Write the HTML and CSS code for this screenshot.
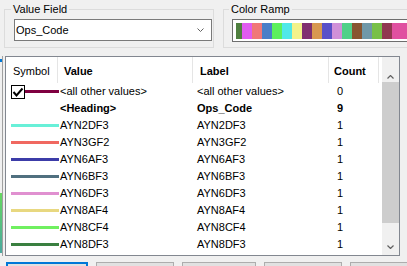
FILE: index.html
```html
<!DOCTYPE html>
<html lang="en">
<head>
    <meta charset="UTF-8">
    <meta name="viewport" content="width=device-width, initial-scale=1.0">
    <title>Unique Values</title>
    <link rel="stylesheet" href="styles.css">
</head>
<body>
    <div class="page">
        <div class="top-row">
            <fieldset class="group value-group">
                <legend>Value Field</legend>
                <div class="combo">
                    <span>Ops_Code</span>
                    <svg class="chevron" width="7" height="4" viewBox="0 0 7 4"><polyline points="0.5,0.5 3.5,3.5 6.5,0.5" fill="none" stroke="#606060" stroke-width="1"/></svg>
                </div>
            </fieldset>
            <fieldset class="group ramp-group">
                <legend>Color Ramp</legend>
                <div class="ramp">
                    <span class="swatch first" style="background:#4f7f3f"></span>
                    <span class="swatch" style="background:#e05cf0"></span>
                    <span class="swatch" style="background:#f07878"></span>
                    <span class="swatch" style="background:#4a7fc8"></span>
                    <span class="swatch" style="background:#5cf05c"></span>
                    <span class="swatch" style="background:#50e8e8"></span>
                    <span class="swatch" style="background:#f2f28a"></span>
                    <span class="swatch" style="background:#803070"></span>
                    <span class="swatch" style="background:#d89850"></span>
                    <span class="swatch" style="background:#5a50c8"></span>
                    <span class="swatch" style="background:#d090d8"></span>
                    <span class="swatch" style="background:#50d088"></span>
                    <span class="swatch" style="background:#885530"></span>
                    <span class="swatch" style="background:#7098a8"></span>
                    <span class="swatch" style="background:#78c048"></span>
                    <span class="swatch" style="background:#903850"></span>
                    <span class="swatch" style="background:#e050a0"></span>
                    <span class="swatch" style="background:#e050a0"></span>
                </div>
            </fieldset>
        </div>

        <div class="middle">
            <div class="side-edge">
                <div class="edge-mark"></div>
                <div class="edge-swatch"></div>
            </div>
            <div class="list">
                <div class="list-body">
                    <div class="list-header">
                        <div class="head-cell symbol-head">Symbol</div>
                        <div class="head-cell value-head">Value</div>
                        <div class="head-cell label-head">Label</div>
                        <div class="head-cell count-head">Count</div>
                        <div class="head-cell filler"></div>
                    </div>
                    <div class="row">
                        <div class="value-cell">
                            <svg class="check" width="14" height="14" viewBox="0 0 14 14"><rect x="0.5" y="0.5" width="13" height="13" fill="#fff" stroke="#000"/><polyline points="2.5,7 5.5,10.5 11.5,3.5" fill="none" stroke="#000" stroke-width="2"/></svg>
                            <span class="line short" style="background:#7f0040"></span>
                            <span class="text">&lt;all other values&gt;</span>
                        </div>
                        <div class="label-cell">&lt;all other values&gt;</div>
                        <div class="count-cell">0</div>
                    </div>
                    <div class="row heading">
                        <div class="value-cell"><span class="line blank"></span><span class="text">&lt;Heading&gt;</span></div>
                        <div class="label-cell">Ops_Code</div>
                        <div class="count-cell">9</div>
                    </div>
                    <div class="row">
                        <div class="value-cell"><span class="line" style="background:#68f0d8"></span><span class="text">AYN2DF3</span></div>
                        <div class="label-cell">AYN2DF3</div>
                        <div class="count-cell">1</div>
                    </div>
                    <div class="row">
                        <div class="value-cell"><span class="line" style="background:#f06860"></span><span class="text">AYN3GF2</span></div>
                        <div class="label-cell">AYN3GF2</div>
                        <div class="count-cell">1</div>
                    </div>
                    <div class="row">
                        <div class="value-cell"><span class="line" style="background:#3c3ca8"></span><span class="text">AYN6AF3</span></div>
                        <div class="label-cell">AYN6AF3</div>
                        <div class="count-cell">1</div>
                    </div>
                    <div class="row">
                        <div class="value-cell"><span class="line" style="background:#50707f"></span><span class="text">AYN6BF3</span></div>
                        <div class="label-cell">AYN6BF3</div>
                        <div class="count-cell">1</div>
                    </div>
                    <div class="row">
                        <div class="value-cell"><span class="line" style="background:#e090d0"></span><span class="text">AYN6DF3</span></div>
                        <div class="label-cell">AYN6DF3</div>
                        <div class="count-cell">1</div>
                    </div>
                    <div class="row">
                        <div class="value-cell"><span class="line" style="background:#e8d880"></span><span class="text">AYN8AF4</span></div>
                        <div class="label-cell">AYN8AF4</div>
                        <div class="count-cell">1</div>
                    </div>
                    <div class="row">
                        <div class="value-cell"><span class="line" style="background:#70f060"></span><span class="text">AYN8CF4</span></div>
                        <div class="label-cell">AYN8CF4</div>
                        <div class="count-cell">1</div>
                    </div>
                    <div class="row">
                        <div class="value-cell"><span class="line" style="background:#3a8040"></span><span class="text">AYN8DF3</span></div>
                        <div class="label-cell">AYN8DF3</div>
                        <div class="count-cell">1</div>
                    </div>
                </div>
                <div class="scrollbar">
                    <div class="scroll-up">
                        <svg width="7" height="4" viewBox="0 0 7 4"><polyline points="0.5,3.5 3.5,0.5 6.5,3.5" fill="none" stroke="#606060" stroke-width="1.2"/></svg>
                    </div>
                    <div class="thumb"></div>
                    <div class="track"></div>
                    <div class="scroll-down">
                        <svg width="7" height="4" viewBox="0 0 7 4"><polyline points="0.5,0.5 3.5,3.5 6.5,0.5" fill="none" stroke="#606060" stroke-width="1.2"/></svg>
                    </div>
                </div>
            </div>
        </div>

        <div class="buttons">
            <button class="btn focused"></button>
            <button class="btn"></button>
            <button class="btn narrow"></button>
            <button class="btn"></button>
            <button class="btn"></button>
        </div>
    </div>
</body>
</html>
```

FILE: styles.css
```css
body {
    margin: 0;
    background-color: #f0f0f0;
    font-family: 'Liberation Sans', Arial, sans-serif;
    font-size: 11px;
    color: #000;
    overflow: hidden;
}
.page {
    width: 407px;
    height: 266px;
    overflow: hidden;
}

/* group boxes */
.top-row {
    display: flex;
    gap: 9px;
    padding: 3px 0 0 4px;
}
.group {
    margin: 0;
    border: 1px solid #dcdcdc;
    min-width: 0;
    box-sizing: border-box;
}
.group legend {
    padding: 0 2px;
    margin-left: -3px;
    line-height: 13px;
}
.value-group {
    flex: 0 0 210px;
    padding: 0 1px 6px 9px;
}
.ramp-group {
    flex: 0 0 220px;
    padding: 0 0 5px 8px;
}
.combo {
    margin-top: 3px;
    height: 22px;
    box-sizing: border-box;
    border: 1px solid #7a7a7a;
    background-color: #fff;
    display: flex;
    align-items: center;
    justify-content: space-between;
    padding: 0 7px 0 1px;
}
.ramp {
    margin-top: 3px;
    border: 1px solid #6e6e6e;
    background-color: #fff;
    padding: 3px 0 2px 3px;
    display: flex;
}
.swatch {
    flex: none;
    width: 10px;
    height: 16px;
}
.swatch.first {
    width: 6px;
}

/* list view */
.middle {
    display: flex;
    margin-top: 8px;
}
.side-edge {
    width: 2px;
    border-right: 1px solid #a0a0a0;
    display: flex;
    flex-direction: column;
}
.edge-mark {
    margin-top: 3px;
    height: 3px;
    background-color: #0078d7;
}
.edge-swatch {
    margin-top: 131px;
    height: 60px;
    background: linear-gradient(#66d860, #4aa8a0);
}
.list {
    margin-left: 2px;
    width: 395px;
    height: 200px;
    box-sizing: border-box;
    border: 1px solid #828790;
    background-color: #fff;
    display: flex;
}
.list-body {
    flex: 1;
}
.list-header {
    display: grid;
    grid-template-columns: 52px 135px 136px 50px 3px;
    height: 26px;
}
.head-cell {
    border-right: 1px solid #e5e5e5;
    padding-top: 8px;
    line-height: 13px;
    font-weight: bold;
}
.head-cell.filler {
    border-right: none;
}
.symbol-head {
    font-weight: normal;
    padding-left: 7px;
}
.value-head {
    padding-left: 6px;
}
.label-head {
    padding-left: 7px;
}
.count-head {
    padding-left: 5px;
}
.row {
    display: flex;
    align-items: center;
    height: 17px;
    line-height: 13px;
    white-space: nowrap;
}
.row.heading {
    font-weight: bold;
}
.value-cell {
    width: 187px;
    box-sizing: border-box;
    padding-left: 5px;
    display: flex;
    align-items: center;
}
.check {
    flex: none;
    display: block;
}
.line {
    flex: none;
    width: 48px;
    height: 3px;
}
.line.short {
    width: 34px;
}
.line.blank {
    background: none;
}
.value-cell .text {
    margin-left: 1px;
}
.label-cell {
    width: 136px;
    box-sizing: border-box;
    padding-left: 4px;
}
.count-cell {
    padding-left: 8px;
}

/* scrollbar */
.scrollbar {
    width: 17px;
    background-color: #f0f0f0;
    display: flex;
    flex-direction: column;
}
.scroll-up {
    height: 25px;
    display: flex;
    justify-content: center;
    align-items: flex-end;
    padding-bottom: 3px;
    box-sizing: border-box;
}
.scroll-up svg,
.scroll-down svg {
    display: block;
}
.thumb {
    height: 141px;
    background-color: #cdcdcd;
}
.track {
    flex: 1;
}
.scroll-down {
    height: 17px;
    display: flex;
    justify-content: center;
    align-items: center;
}

/* dialog buttons */
.buttons {
    display: flex;
    gap: 8px;
    margin-top: 6px;
    padding-left: 6px;
}
.btn {
    flex: none;
    width: 78px;
    height: 23px;
    margin: 0;
    padding: 0;
    border: 1px solid #adadad;
    background-color: #e1e1e1;
}
.btn.focused {
    width: 82px;
    border: 2px solid #0078d7;
}
.btn.narrow {
    width: 74px;
}
```
